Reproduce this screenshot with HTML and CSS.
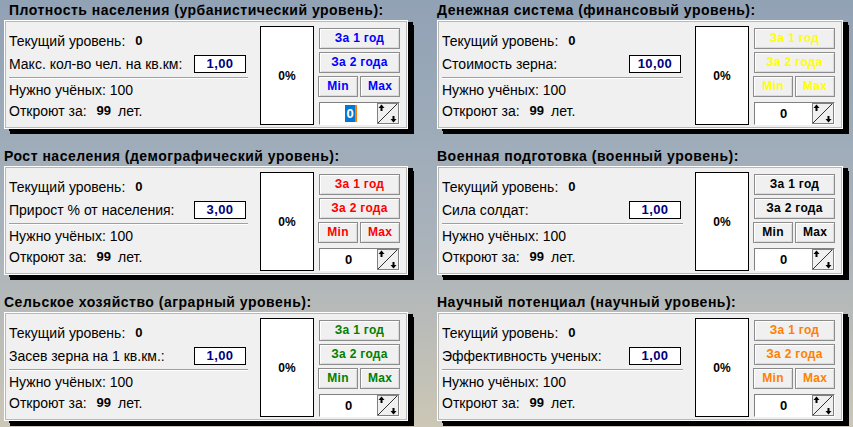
FILE: index.html
```html
<!DOCTYPE html>
<html lang="ru">
<head>
<meta charset="utf-8">
<title>Уровни</title>
<link rel="stylesheet" href="styles.css">
</head>
<body>
<div class="board">

  <section class="cell">
    <h2 class="title first">Плотность населения (урбанистический уровень):</h2>
    <div class="panel">
      <div class="info">
        <div class="row"><span>Текущий уровень:</span><b class="val">0</b></div>
        <div class="row row2"><span>Макс. кол-во чел. на кв.км:</span><span class="field">1,00</span></div>
        <div class="sep"></div>
        <div class="row row3"><span>Нужно учёных: 100</span></div>
        <div class="row row4"><span>Откроют за:</span><b class="val years">99</b><span class="unit">лет.</span></div>
      </div>
      <div class="pct">0%</div>
      <div class="ctrl c-blue">
        <div class="btn">За 1 год</div>
        <div class="btn">За 2 года</div>
        <div class="pair"><div class="btn">Min</div><div class="btn">Max</div></div>
        <div class="spin">
          <div class="spin-val"><span class="sel">0</span><span class="caret"></span></div>
          <div class="spin-btn"><svg width="21" height="21" viewBox="0 0 21 21"><line x1="0" y1="21" x2="21" y2="0" stroke="#303030" stroke-width="1"/><path d="M4.5 1.5 L1.5 5 H7.5 Z" fill="#000"/><rect x="3.5" y="4" width="2" height="4" fill="#000"/><path d="M16.5 19.5 L13.5 16 H19.5 Z" fill="#000"/><rect x="15.5" y="13" width="2" height="4" fill="#000"/></svg></div>
        </div>
      </div>
    </div>
  </section>

  <section class="cell">
    <h2 class="title">Денежная система (финансовый уровень):</h2>
    <div class="panel">
      <div class="info">
        <div class="row"><span>Текущий уровень:</span><b class="val">0</b></div>
        <div class="row row2"><span>Стоимость зерна:</span><span class="field">10,00</span></div>
        <div class="sep"></div>
        <div class="row row3"><span>Нужно учёных: 100</span></div>
        <div class="row row4"><span>Откроют за:</span><b class="val years">99</b><span class="unit">лет.</span></div>
      </div>
      <div class="pct">0%</div>
      <div class="ctrl c-yellow">
        <div class="btn">За 1 год</div>
        <div class="btn">За 2 года</div>
        <div class="pair"><div class="btn">Min</div><div class="btn">Max</div></div>
        <div class="spin">
          <div class="spin-val">0</div>
          <div class="spin-btn"><svg width="21" height="21" viewBox="0 0 21 21"><line x1="0" y1="21" x2="21" y2="0" stroke="#303030" stroke-width="1"/><path d="M4.5 1.5 L1.5 5 H7.5 Z" fill="#000"/><rect x="3.5" y="4" width="2" height="4" fill="#000"/><path d="M16.5 19.5 L13.5 16 H19.5 Z" fill="#000"/><rect x="15.5" y="13" width="2" height="4" fill="#000"/></svg></div>
        </div>
      </div>
    </div>
  </section>

  <section class="cell">
    <h2 class="title">Рост населения (демографический уровень):</h2>
    <div class="panel">
      <div class="info">
        <div class="row"><span>Текущий уровень:</span><b class="val">0</b></div>
        <div class="row row2"><span>Прирост % от населения:</span><span class="field">3,00</span></div>
        <div class="sep"></div>
        <div class="row row3"><span>Нужно учёных: 100</span></div>
        <div class="row row4"><span>Откроют за:</span><b class="val years">99</b><span class="unit">лет.</span></div>
      </div>
      <div class="pct">0%</div>
      <div class="ctrl c-red">
        <div class="btn">За 1 год</div>
        <div class="btn">За 2 года</div>
        <div class="pair"><div class="btn">Min</div><div class="btn">Max</div></div>
        <div class="spin">
          <div class="spin-val">0</div>
          <div class="spin-btn"><svg width="21" height="21" viewBox="0 0 21 21"><line x1="0" y1="21" x2="21" y2="0" stroke="#303030" stroke-width="1"/><path d="M4.5 1.5 L1.5 5 H7.5 Z" fill="#000"/><rect x="3.5" y="4" width="2" height="4" fill="#000"/><path d="M16.5 19.5 L13.5 16 H19.5 Z" fill="#000"/><rect x="15.5" y="13" width="2" height="4" fill="#000"/></svg></div>
        </div>
      </div>
    </div>
  </section>

  <section class="cell">
    <h2 class="title">Военная подготовка (военный уровень):</h2>
    <div class="panel">
      <div class="info">
        <div class="row"><span>Текущий уровень:</span><b class="val">0</b></div>
        <div class="row row2"><span>Сила солдат:</span><span class="field">1,00</span></div>
        <div class="sep"></div>
        <div class="row row3"><span>Нужно учёных: 100</span></div>
        <div class="row row4"><span>Откроют за:</span><b class="val years">99</b><span class="unit">лет.</span></div>
      </div>
      <div class="pct">0%</div>
      <div class="ctrl c-black">
        <div class="btn">За 1 год</div>
        <div class="btn">За 2 года</div>
        <div class="pair"><div class="btn">Min</div><div class="btn">Max</div></div>
        <div class="spin">
          <div class="spin-val">0</div>
          <div class="spin-btn"><svg width="21" height="21" viewBox="0 0 21 21"><line x1="0" y1="21" x2="21" y2="0" stroke="#303030" stroke-width="1"/><path d="M4.5 1.5 L1.5 5 H7.5 Z" fill="#000"/><rect x="3.5" y="4" width="2" height="4" fill="#000"/><path d="M16.5 19.5 L13.5 16 H19.5 Z" fill="#000"/><rect x="15.5" y="13" width="2" height="4" fill="#000"/></svg></div>
        </div>
      </div>
    </div>
  </section>

  <section class="cell">
    <h2 class="title">Сельское хозяйство (аграрный уровень):</h2>
    <div class="panel">
      <div class="info">
        <div class="row"><span>Текущий уровень:</span><b class="val">0</b></div>
        <div class="row row2"><span>Засев зерна на 1 кв.км.:</span><span class="field">1,00</span></div>
        <div class="sep"></div>
        <div class="row row3"><span>Нужно учёных: 100</span></div>
        <div class="row row4"><span>Откроют за:</span><b class="val years">99</b><span class="unit">лет.</span></div>
      </div>
      <div class="pct">0%</div>
      <div class="ctrl c-green">
        <div class="btn">За 1 год</div>
        <div class="btn">За 2 года</div>
        <div class="pair"><div class="btn">Min</div><div class="btn">Max</div></div>
        <div class="spin">
          <div class="spin-val">0</div>
          <div class="spin-btn"><svg width="21" height="21" viewBox="0 0 21 21"><line x1="0" y1="21" x2="21" y2="0" stroke="#303030" stroke-width="1"/><path d="M4.5 1.5 L1.5 5 H7.5 Z" fill="#000"/><rect x="3.5" y="4" width="2" height="4" fill="#000"/><path d="M16.5 19.5 L13.5 16 H19.5 Z" fill="#000"/><rect x="15.5" y="13" width="2" height="4" fill="#000"/></svg></div>
        </div>
      </div>
    </div>
  </section>

  <section class="cell">
    <h2 class="title">Научный потенциал (научный уровень):</h2>
    <div class="panel">
      <div class="info">
        <div class="row"><span>Текущий уровень:</span><b class="val">0</b></div>
        <div class="row row2"><span>Эффективность ученых:</span><span class="field">1,00</span></div>
        <div class="sep"></div>
        <div class="row row3"><span>Нужно учёных: 100</span></div>
        <div class="row row4"><span>Откроют за:</span><b class="val years">99</b><span class="unit">лет.</span></div>
      </div>
      <div class="pct">0%</div>
      <div class="ctrl c-orange">
        <div class="btn">За 1 год</div>
        <div class="btn">За 2 года</div>
        <div class="pair"><div class="btn">Min</div><div class="btn">Max</div></div>
        <div class="spin">
          <div class="spin-val">0</div>
          <div class="spin-btn"><svg width="21" height="21" viewBox="0 0 21 21"><line x1="0" y1="21" x2="21" y2="0" stroke="#303030" stroke-width="1"/><path d="M4.5 1.5 L1.5 5 H7.5 Z" fill="#000"/><rect x="3.5" y="4" width="2" height="4" fill="#000"/><path d="M16.5 19.5 L13.5 16 H19.5 Z" fill="#000"/><rect x="15.5" y="13" width="2" height="4" fill="#000"/></svg></div>
        </div>
      </div>
    </div>
  </section>

</div>
</body>
</html>
```

FILE: styles.css
```css
html, body {
  margin: 0;
  padding: 0;
}
body {
  width: 853px;
  height: 427px;
  overflow: hidden;
  font-family: "Liberation Sans", Arial, sans-serif;
  color: #000;
  background: linear-gradient(to bottom, #92a2b5 0%, #9dabb9 30%, #a9b2bb 55%, #b8bbb8 75%, #ccc7b6 100%);
}
.board {
  display: grid;
  grid-template-columns: 404px 406px;
  column-gap: 29px;
  row-gap: 19px;
  padding: 2px 0 0 4px;
}
.cell {
  display: flex;
  flex-direction: column;
}
.title {
  margin: 0 0 2px 0;
  font-size: 14px;
  font-weight: bold;
  line-height: 16px;
  height: 16px;
  white-space: nowrap;
  letter-spacing: 0.5px;
}
.title.first {
  padding-left: 5px;
}
.panel {
  box-sizing: border-box;
  height: 109px;
  display: flex;
  align-items: flex-start;
  padding: 0 7px 0 4px;
  background: #f0f0f0;
  border: 1px solid #ffffff;
  box-shadow: inset 1px 1px 0 #b8b8b8, inset -1px -1px 0 #b8b8b8, 6px 5px 0 #000, 5px 2px 0 #000;
}
.info {
  flex: 1;
  margin-top: 11px;
  font-size: 14px;
}
.row {
  display: flex;
  align-items: center;
  height: 18px;
  line-height: 18px;
  white-space: nowrap;
}
.row2 { margin-top: 5px; }
.row3 { margin-top: 2px; }
.row4 { margin-top: 2px; height: 19px; }
.val {
  font-size: 13px;
  font-weight: bold;
  margin-left: 10px;
}
.years { margin-left: 10px; }
.unit { margin-left: 7px; }
.field {
  box-sizing: border-box;
  margin-left: auto;
  margin-right: 2px;
  width: 52px;
  height: 18px;
  line-height: 16px;
  border: 1px solid #000;
  background: #fff;
  color: #000080;
  font-size: 13px;
  font-weight: bold;
  text-align: center;
  letter-spacing: 0.4px;
}
.sep {
  margin-top: 4px;
  height: 0;
  border-top: 1px solid #a0a0a0;
  border-bottom: 1px solid #ffffff;
}
.pct {
  box-sizing: border-box;
  margin: 5px 0 0 12px;
  width: 54px;
  height: 99px;
  border: 1px solid #000;
  background: #fff;
  display: flex;
  align-items: center;
  justify-content: center;
  font-size: 12px;
  font-weight: bold;
}
.ctrl {
  width: 81px;
  margin: 7px 0 0 5px;
  display: flex;
  flex-direction: column;
  gap: 3px;
}
.btn {
  box-sizing: border-box;
  height: 21px;
  line-height: 19px;
  border: 1px solid #8c8c8c;
  background: #f0f0f0;
  box-shadow: inset 1px 1px 0 #ffffff, inset -1px -1px 0 #dadada;
  text-align: center;
  font-size: 12px;
  font-weight: bold;
  letter-spacing: 0.3px;
  white-space: nowrap;
}
.pair {
  display: flex;
  gap: 2px;
  margin-left: -1px;
}
.pair .btn { flex: 1; }
.c-blue .btn { color: #0000ff; }
.c-yellow .btn { color: #ffff00; }
.c-red .btn { color: #ff0000; }
.c-black .btn { color: #000000; }
.c-green .btn { color: #008000; }
.c-orange .btn { color: #ff8000; }
.spin {
  box-sizing: border-box;
  margin-top: 2px;
  height: 23px;
  display: flex;
  border-top: 1px solid #808080;
  border-left: 1px solid #808080;
  border-right: 1px solid #ffffff;
  border-bottom: 1px solid #ffffff;
}
.spin-val {
  flex: 1;
  background: #fff;
  display: flex;
  align-items: center;
  justify-content: center;
  font-size: 13px;
  font-weight: bold;
}
.sel {
  background: #0078d7;
  color: #fff;
  height: 17px;
  line-height: 17px;
  padding: 0 1px;
  margin-left: 5px;
}
.caret {
  width: 2px;
  height: 17px;
  background: #ff8000;
}
.spin-btn {
  box-sizing: border-box;
  width: 22px;
  height: 21px;
  border: 1px solid #808080;
  background: #f0f0f0;
  overflow: hidden;
}
.spin-btn svg {
  display: block;
  margin: -1px 0 0 -1px;
}
```
